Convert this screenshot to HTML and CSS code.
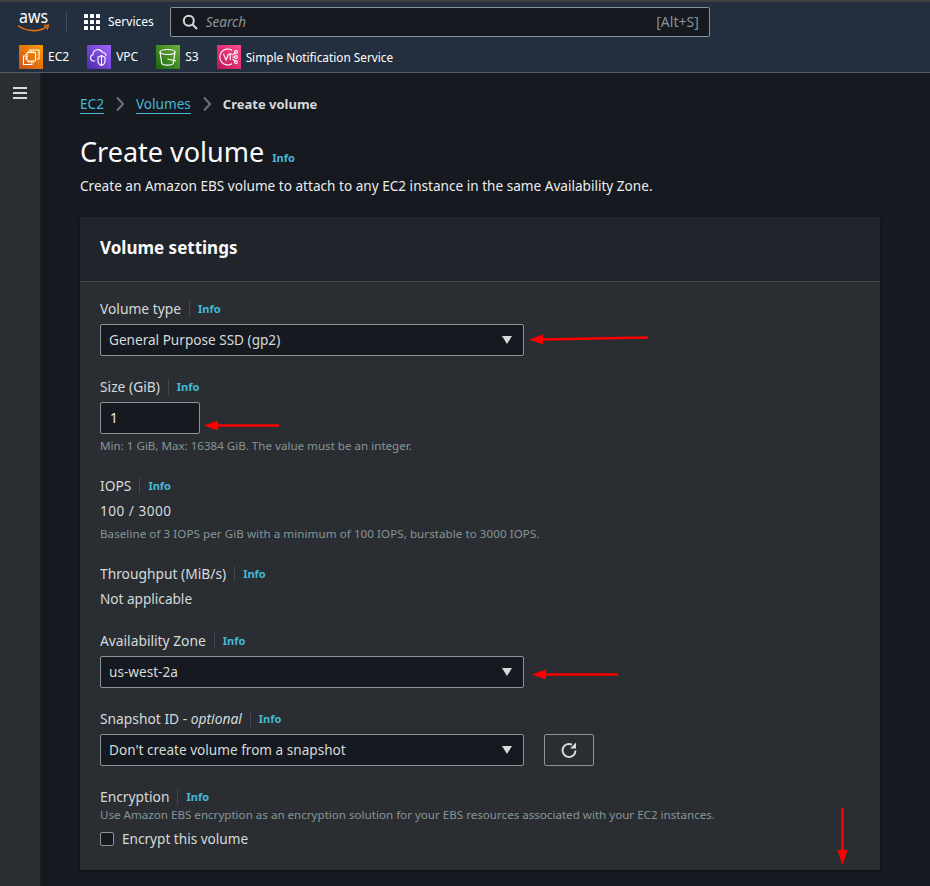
FILE: index.html
```html
<!DOCTYPE html>
<html lang="en">

<head>
    <meta charset="UTF-8">
    <meta name="viewport" content="width=device-width, initial-scale=1.0">
    <title>Create volume</title>
    <link rel="stylesheet" href="styles.css">
</head>

<body>

    <header class="top-nav">
        <div class="nav-row">
            <svg class="aws-logo" width="34" height="40" viewBox="0 0 34 40">
                <text x="1" y="20.500" class="aws-text" textLength="29" lengthAdjust="spacingAndGlyphs">aws</text>
                <path d="M.5 24c8 5.500 20 6.500 28 .8" fill="none" stroke="#ec7211" stroke-width="1.500" stroke-linecap="round" />
                <path d="M26.500 23.500l4-.3-1.200 4" fill="none" stroke="#ec7211" stroke-width="1.300" stroke-linecap="round" />
            </svg>
            <span class="nav-divider"></span>
            <svg class="grid-icon" width="16" height="16" viewBox="0 0 16 16" fill="#fff">
                <rect x="0" y="0" width="4" height="4" rx=".6" />
                <rect x="6" y="0" width="4" height="4" rx=".6" />
                <rect x="12" y="0" width="4" height="4" rx=".6" />
                <rect x="0" y="6" width="4" height="4" rx=".6" />
                <rect x="6" y="6" width="4" height="4" rx=".6" />
                <rect x="12" y="6" width="4" height="4" rx=".6" />
                <rect x="0" y="12" width="4" height="4" rx=".6" />
                <rect x="6" y="12" width="4" height="4" rx=".6" />
                <rect x="12" y="12" width="4" height="4" rx=".6" />
            </svg>
            <span class="services">Services</span>
            <div class="search-box">
                <svg width="16" height="16" viewBox="0 0 16 16" fill="none" stroke="#d5dbdb" stroke-width="2">
                    <circle cx="6.800" cy="6.800" r="5" />
                    <path d="M10.500 10.500l4.500 4.500" />
                </svg>
                <span class="search-text">Search</span>
                <span class="search-key">[Alt+S]</span>
            </div>
        </div>
        <div class="fav-row">
            <div class="fav">
                <span class="fav-icon ec2">
                    <svg width="24" height="24" viewBox="0 0 24 24" fill="none" stroke="#fff" stroke-width="1.100">
                        <path d="M10 5h10v9h-2" />
                        <path d="M6 11H4.500v8.500H13V18" />
                        <rect x="8" y="7.500" width="8.500" height="8.500" rx=".8" />
                        <path d="M10 5.500v2M12.200 5.500v2M14.400 5.500v2M10 16v2M12.200 16v2M14.400 16v2M6 9.700h2M6 11.800h2M6 13.900h2" />
                    </svg>
                </span>
                EC2
            </div>
            <div class="fav">
                <span class="fav-icon vpc">
                    <svg width="24" height="24" viewBox="0 0 24 24" fill="none" stroke="#fff" stroke-width="1.100">
                        <path d="M8 16H6.500a3.200 3.200 0 0 1-.5-6.300 5 5 0 0 1 9.500-2.200 3.600 3.600 0 0 1 3.500 3.500" />
                        <path d="M11 12c1.500 0 2.500-1 3.500-1.500 1 .5 2 1.500 3.500 1.500v4c0 2.500-2 4-3.500 4.500-1.500-.5-3.500-2-3.500-4.500z" />
                        <path d="M14.500 10.500v10" />
                    </svg>
                </span>
                VPC
            </div>
            <div class="fav">
                <span class="fav-icon s3">
                    <svg width="24" height="24" viewBox="0 0 24 24" fill="none" stroke="#fff" stroke-width="1.200">
                        <ellipse cx="11.500" cy="7" rx="7.500" ry="2.500" />
                        <path d="M4 7l1.700 11c.3 1.500 3 2.200 5.800 2.200s5.500-.7 5.800-2.200L19 7" />
                        <path d="M11.500 14l8.500 2" />
                    </svg>
                </span>
                S3
            </div>
            <div class="fav fav-long">
                <span class="fav-icon sns">
                    <svg width="24" height="24" viewBox="0 0 24 24" fill="none" stroke="#fff" stroke-width="1.100">
                        <path d="M15 5.200a8 8 0 1 0 0 13.600" />
                        <path d="M6.500 9l2.500 6 2.500-6" />
                        <path d="M11.500 9h3.500M13.200 9v6" />
                        <circle cx="19" cy="7" r="1.400" />
                        <circle cx="19" cy="12" r="1.400" />
                        <circle cx="19" cy="17" r="1.400" />
                        <path d="M15.500 12h2M15.500 10l2.500-2M15.500 14l2.500 2" />
                    </svg>
                </span>
                Simple Notification Service
            </div>
        </div>
    </header>

    <div class="page">
        <aside class="side-bar">
            <div class="burger"><span></span><span></span><span></span></div>
        </aside>

        <main class="content">
            <nav class="crumbs">
                <a class="crumb-link">EC2</a>
                <svg class="chev" width="8" height="16" viewBox="0 0 8 16" fill="none" stroke="#687078" stroke-width="2"><path d="M1 1.500L7 8l-6 6.500" /></svg>
                <a class="crumb-link">Volumes</a>
                <svg class="chev" width="8" height="16" viewBox="0 0 8 16" fill="none" stroke="#687078" stroke-width="2"><path d="M1 1.500L7 8l-6 6.500" /></svg>
                <span class="crumb-current">Create volume</span>
            </nav>

            <div class="title-row">
                <h1>Create volume</h1>
                <span class="info">Info</span>
            </div>
            <p class="subtitle">Create an Amazon EBS volume to attach to any EC2 instance in the same Availability Zone.</p>

            <section class="card">
                <h2 class="card-head">Volume settings</h2>
                <div class="card-body">

                    <div class="field field-type">
                        <div class="label-row"><span>Volume type</span><span class="sep"></span><span class="info">Info</span></div>
                        <div class="select">General Purpose SSD (gp2)<i class="caret"></i></div>
                    </div>

                    <div class="field field-size">
                        <div class="label-row"><span>Size (GiB)</span><span class="sep"></span><span class="info">Info</span></div>
                        <div class="number-input">1</div>
                        <p class="hint">Min: 1 GiB, Max: 16384 GiB. The value must be an integer.</p>
                    </div>

                    <div class="field field-iops">
                        <div class="label-row"><span>IOPS</span><span class="sep"></span><span class="info">Info</span></div>
                        <div class="value">100 / 3000</div>
                        <p class="hint">Baseline of 3 IOPS per GiB with a minimum of 100 IOPS, burstable to 3000 IOPS.</p>
                    </div>

                    <div class="field field-through">
                        <div class="label-row"><span>Throughput (MiB/s)</span><span class="sep"></span><span class="info">Info</span></div>
                        <div class="value">Not applicable</div>
                    </div>

                    <div class="field field-zone">
                        <div class="label-row"><span>Availability Zone</span><span class="sep"></span><span class="info">Info</span></div>
                        <div class="select">us-west-2a<i class="caret"></i></div>
                    </div>

                    <div class="field field-snap">
                        <div class="label-row"><span>Snapshot ID - <em>optional</em></span><span class="sep"></span><span class="info">Info</span></div>
                        <div class="snap-row">
                            <div class="select">Don't create volume from a snapshot<i class="caret"></i></div>
                            <button class="refresh">
                                <svg width="18" height="18" viewBox="0 0 18 18" fill="none" stroke="#d5dbdb" stroke-width="2">
                                    <path d="M15.500 9.500a6.500 6.500 0 1 1-3.500-5.800" />
                                    <path d="M16 1.500v6h-6z" fill="#d5dbdb" stroke="none" />
                                </svg>
                            </button>
                        </div>
                    </div>

                    <div class="field field-enc">
                        <div class="label-row"><span>Encryption</span><span class="sep"></span><span class="info">Info</span></div>
                        <p class="hint enc-hint">Use Amazon EBS encryption as an encryption solution for your EBS resources associated with your EC2 instances.</p>
                        <label class="check"><span class="box"></span>Encrypt this volume</label>
                    </div>

                </div>
            </section>
        </main>
    </div>

    <!-- red annotation arrows drawn over the screenshot -->
    <svg class="marks" width="930" height="886" viewBox="0 0 930 886">
        <g stroke="#f00" stroke-width="2.500" stroke-linecap="round" fill="#f00">
            <path d="M647 337.500L540 339.500" />
            <path d="M278 425.500L214 425.500" />
            <path d="M617 674.500L542 674.500" />
            <path d="M842.500 809V852" />
        </g>
        <g fill="#f00">
            <path d="M529 339.500l14-5v10z" />
            <path d="M204 425.500l14-5v10z" />
            <path d="M532 674.500l14-5v10z" />
            <path d="M842.500 865l-5-15h10z" />
        </g>
    </svg>

</body>

</html>
```

FILE: styles.css
```css
body {
    margin: 0;
    height: 886px;
    overflow: hidden;
    background-color: #16191f;
    color: #eaeded;
    font-family: 'Noto Sans', sans-serif;
    font-size: 13.6px;
    line-height: 20px;
}

p {
    margin: 0;
}

/* top bar */
.top-nav {
    height: 70px;
    background-color: #232f3e;
    border-top: 2px solid #414141;
    border-bottom: 1px solid #545b64;
}

.nav-row {
    display: flex;
    align-items: center;
    height: 40px;
    padding-left: 18px;
}

.aws-logo {
    margin-right: 14px;
}

.aws-text {
    font-family: 'Noto Sans', sans-serif;
    font-size: 18px;
    fill: #fff;
}

.nav-divider {
    width: 1px;
    height: 22px;
    background-color: #414d5c;
    margin-right: 17px;
}

.grid-icon {
    margin-right: 8px;
}

.services {
    font-size: 12px;
    color: #fff;
    margin-right: 16px;
}

.search-box {
    display: flex;
    align-items: center;
    width: 540px;
    height: 30px;
    box-sizing: border-box;
    background-color: #16191f;
    border: 1px solid #879596;
    border-radius: 2px;
    padding: 0 10px 0 11px;
}

.search-text {
    flex: 1;
    margin-left: 8px;
    font-size: 13.500px;
    font-style: italic;
    color: #879596;
}

.search-key {
    font-size: 14px;
    color: #879596;
}

.fav-row {
    display: flex;
    align-items: center;
    height: 30px;
    padding-left: 19px;
    font-size: 12px;
    color: #fff;
}

.fav {
    display: flex;
    align-items: center;
    margin-right: 18px;
}

.fav-long {
    font-size: 11.800px;
}

.fav-icon {
    display: flex;
    align-items: center;
    justify-content: center;
    width: 24px;
    height: 24px;
    margin-right: 5px;
}

.ec2 {
    background: linear-gradient(45deg, #c8511b, #ff9900);
}

.vpc {
    background: linear-gradient(45deg, #4d27aa, #a166ff);
}

.s3 {
    background: linear-gradient(45deg, #1b660f, #6cae3e);
}

.sns {
    background: linear-gradient(45deg, #bc1356, #ff4f8b);
}

/* page */
.page {
    display: flex;
    height: 813px;
}

.side-bar {
    width: 40px;
    background-color: #2a2e33;
    border-right: 1px solid #1b1f25;
}

.burger {
    display: flex;
    flex-direction: column;
    gap: 3px;
    padding: 14px 0 0 13px;
}

.burger span {
    width: 14px;
    height: 2px;
    background-color: #d5dbdb;
}

.content {
    width: 800px;
    padding: 21px 0 0 39px;
}

.crumbs {
    display: flex;
    align-items: center;
    height: 20px;
    margin-bottom: 19px;
}

.crumb-link {
    color: #44b9d6;
    border-bottom: 1px solid #44b9d6;
    line-height: 18px;
}

.chev {
    margin: 0 12px;
}

.crumb-current {
    font-size: 13px;
    font-weight: 700;
    color: #d5dbdb;
}

.title-row {
    display: flex;
    align-items: baseline;
    height: 38px;
}

h1 {
    margin: 0 8px 0 0;
    font-size: 27px;
    font-weight: 400;
    line-height: 38px;
    color: #fafafa;
}

.info {
    font-size: 11px;
    font-weight: 700;
    color: #44b9d6;
}

.subtitle {
    margin-top: 5px;
    color: #eaeded;
}

.card {
    width: 800px;
    height: 653px;
    margin-top: 21px;
    background-color: #2a2e33;
    box-shadow: 0 1px 2px #0c0e11;
}

.card-head {
    margin: 0;
    height: 65px;
    box-sizing: border-box;
    padding: 20px;
    font-size: 17px;
    font-weight: 700;
    line-height: 22px;
    color: #fafafa;
    background-color: #21252b;
    border-bottom: 1px solid #414750;
}

.card-body {
    padding: 17px 20px 0;
}

.label-row {
    display: flex;
    align-items: center;
    height: 20px;
    margin-bottom: 5px;
    font-size: 13.800px;
    color: #d5dbdb;
}

.label-row em {
    font-style: italic;
}

.sep {
    width: 1px;
    height: 16px;
    background-color: #414750;
    margin: 0 8px;
}

.select {
    position: relative;
    width: 424px;
    height: 32px;
    box-sizing: border-box;
    background-color: #16191f;
    border: 1px solid #879596;
    border-radius: 2px;
    padding: 5px 8px;
    color: #d5dbdb;
}

.caret {
    position: absolute;
    top: 11px;
    right: 11px;
    border-style: solid;
    border-width: 8px 5px 0;
    border-color: #d5dbdb transparent transparent;
}

.number-input {
    width: 100px;
    height: 32px;
    box-sizing: border-box;
    background-color: #16191f;
    border: 1px solid #879596;
    border-radius: 2px;
    padding: 5px 9px;
    color: #eaeded;
}

.hint {
    font-size: 11.600px;
    line-height: 16px;
    color: #879596;
}

.field-type {
    margin-bottom: 21px;
}

.field-size .hint {
    margin-top: 4px;
}

.field-size {
    margin-bottom: 22px;
}

.value {
    color: #d5dbdb;
}

.field-iops {
    margin-bottom: 22px;
}

.field-iops .value {
    letter-spacing: .5px;
}

.field-iops .hint {
    margin-top: 5px;
    letter-spacing: .06px;
}

.field-through {
    margin-bottom: 22px;
}

.field-zone {
    margin-bottom: 21px;
}

.snap-row {
    display: flex;
    gap: 20px;
}

.refresh {
    display: flex;
    align-items: center;
    justify-content: center;
    width: 50px;
    height: 32px;
    background: none;
    border: 1px solid #879596;
    border-radius: 2px;
    padding: 0;
}

.field-snap {
    margin-bottom: 21px;
}

.field-enc .label-row {
    margin-bottom: 0;
}

.check {
    display: flex;
    align-items: center;
    margin-top: 6px;
    color: #d5dbdb;
}

.box {
    width: 12px;
    height: 12px;
    background-color: #16191f;
    border: 1px solid #879596;
    border-radius: 2px;
    margin-right: 8px;
}

.marks {
    position: absolute;
    top: 0;
    left: 0;
}
```
